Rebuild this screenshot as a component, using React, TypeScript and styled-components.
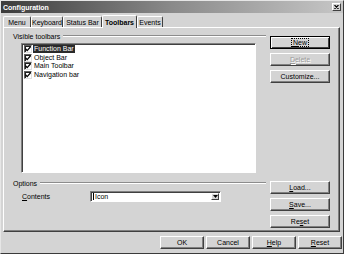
import React from 'react';
import styled, { createGlobalStyle } from 'styled-components';

const GlobalStyle = createGlobalStyle`
  html, body {
    margin: 0;
    padding: 0;
    background: #d4d4d4;
  }
  body {
    font-family: 'Liberation Sans', Arial, sans-serif;
    font-size: 7px;
    color: #000;
  }
`;

const Dialog = styled.div`
  width: 344px;
  height: 254px;
  box-sizing: border-box;
  background: #d4d4d4;
  border: 1px solid;
  border-color: #e6e6e6 #3a3a3a #3a3a3a #e6e6e6;
  display: flex;
  flex-direction: column;
  overflow: hidden;
`;

const TitleBar = styled.div`
  height: 12px;
  background: linear-gradient(to right, #3c3c3c 0%, #8a8a8a 50%, #c6c6c6 100%);
  display: flex;
  align-items: center;
  justify-content: space-between;
  padding: 0 2px 0 2px;
`;

const Title = styled.span`
  color: #fff;
  font-weight: bold;
  font-size: 7px;
`;

const CloseBox = styled.div`
  width: 9px;
  height: 8px;
  box-sizing: border-box;
  background: #d4d4d4;
  border: 1px solid;
  border-color: #fff #404040 #404040 #fff;
  display: flex;
  align-items: center;
  justify-content: center;
`;

const TabStrip = styled.div`
  height: 14px;
  display: flex;
  align-items: flex-end;
  padding-left: 2px;
`;

const Tab = styled.div<{ $w: number; $active?: boolean }>`
  width: ${(p) => p.$w}px;
  height: ${(p) => (p.$active ? 13 : 11)}px;
  margin-bottom: ${(p) => (p.$active ? -1 : 0)}px;
  box-sizing: border-box;
  border-top: 1px solid #fff;
  border-left: 1px solid #fff;
  border-right: 1px solid #404040;
  border-radius: 2px 2px 0 0;
  background: #d4d4d4;
  font-weight: ${(p) => (p.$active ? 'bold' : 'normal')};
  display: flex;
  align-items: center;
  justify-content: center;
  position: relative;
  z-index: ${(p) => (p.$active ? 2 : 1)};
`;

const Panel = styled.div`
  height: 205px;
  margin: 0 3px 0 2px;
  box-sizing: border-box;
  border: 1px solid;
  border-color: #fff #404040 #404040 #fff;
  box-shadow: inset -1px -1px 0 #808080;
  display: flex;
`;

const LeftColumn = styled.div`
  width: 262px;
  display: flex;
  flex-direction: column;
  padding-top: 4px;
`;

const GroupHeader = styled.div`
  display: flex;
  align-items: center;
  height: 8px;
  padding-left: 9px;
`;

const GroupLine = styled.div`
  flex: 1;
  height: 0;
  margin-left: 3px;
  border-top: 1px solid #8c8c8c;
  border-bottom: 1px solid #fff;
`;

const ListBox = styled.div`
  margin: 3px 0 0 17px;
  width: 235px;
  height: 130px;
  box-sizing: border-box;
  background: #fff;
  border: 1px solid;
  border-color: #808080 #fff #fff #808080;
  box-shadow: inset 1px 1px 0 #404040;
  padding: 1px 0 0 2px;
`;

const ListItem = styled.div`
  height: 8.5px;
  display: flex;
  align-items: center;
`;

const CheckBox = styled.div`
  width: 8px;
  height: 8px;
  box-sizing: border-box;
  background: #fff;
  border: 1px solid;
  border-color: #606060 #e0e0e0 #e0e0e0 #606060;
  box-shadow: inset 1px 1px 0 #202020;
  display: flex;
  align-items: center;
  justify-content: center;
  margin-right: 1px;
`;

const ItemLabel = styled.span<{ $selected?: boolean }>`
  padding: 0 1px;
  line-height: 8px;
  background: ${(p) => (p.$selected ? '#2a2a2a' : 'transparent')};
  color: ${(p) => (p.$selected ? '#fff' : '#000')};
`;

const OptionsGroup = styled.div`
  margin-top: 6px;
`;

const FieldRow = styled.div`
  display: flex;
  align-items: center;
  margin-top: 4px;
  padding-left: 18px;
  height: 11px;
`;

const FieldLabel = styled.span`
  width: 68px;
`;

const Select = styled.div`
  width: 131px;
  height: 11px;
  box-sizing: border-box;
  background: #fff;
  border: 1px solid;
  border-color: #808080 #fff #fff #808080;
  box-shadow: inset 1px 1px 0 #404040;
  display: flex;
  align-items: center;
  padding-left: 2px;
`;

const SelectText = styled.span`
  flex: 1;
  border-left: 1px solid #000;
  padding-left: 1px;
  line-height: 7px;
`;

const ArrowButton = styled.div`
  width: 8px;
  height: 7px;
  margin-right: 1px;
  box-sizing: border-box;
  background: #d4d4d4;
  border: 1px solid;
  border-color: #fff #404040 #404040 #fff;
  display: flex;
  align-items: center;
  justify-content: center;
`;

const RightColumn = styled.div`
  width: 60px;
  margin-left: 4px;
  padding: 8px 0 3px;
  display: flex;
  flex-direction: column;
  gap: 4px;
`;

const Spacer = styled.div`
  flex: 1;
`;

const Button = styled.div<{ $w?: number; $default?: boolean; $disabled?: boolean }>`
  width: ${(p) => p.$w ?? 60}px;
  height: 13px;
  box-sizing: border-box;
  background: #d4d4d4;
  border: 1px solid;
  border-color: ${(p) => (p.$default ? '#000' : '#fff #404040 #404040 #fff')};
  box-shadow: ${(p) =>
    p.$default
      ? 'inset 1px 1px 0 #fff, inset -1px -1px 0 #404040'
      : 'inset -1px -1px 0 #808080'};
  color: ${(p) => (p.$disabled ? '#9a9a9a' : '#000')};
  text-shadow: ${(p) => (p.$disabled ? '1px 1px 0 #fff' : 'none')};
  display: flex;
  align-items: center;
  justify-content: center;
  flex-shrink: 0;
`;

const FocusLabel = styled.span`
  outline: 1px dotted #000;
  line-height: 7px;
  padding: 0 1px;
`;

const Footer = styled.div`
  display: flex;
  justify-content: flex-end;
  gap: 2px;
  margin-top: 4px;
  padding-right: 1px;
`;

const CheckMark = () => (
  <svg width="6" height="6" viewBox="0 0 6 6">
    <path d="M0.5 2.8 L2.2 4.6 L5.6 0.8" stroke="#000" strokeWidth="1.3" fill="none" />
  </svg>
);

const toolbars = [
  { name: 'Function Bar', selected: true },
  { name: 'Object Bar' },
  { name: 'Main Toolbar' },
  { name: 'Navigation bar' },
];

const tabs = [
  { name: 'Menu', w: 28 },
  { name: 'Keyboard', w: 32 },
  { name: 'Status Bar', w: 39 },
  { name: 'Toolbars', w: 35, active: true },
  { name: 'Events', w: 26 },
];

export default function App() {
  return (
    <>
      <GlobalStyle />
      <Dialog>
        <TitleBar>
          <Title>Configuration</Title>
          <CloseBox>
            <svg width="5" height="4" viewBox="0 0 5 4">
              <path d="M0.5 0 L4.5 4 M4.5 0 L0.5 4" stroke="#000" strokeWidth="1.1" />
            </svg>
          </CloseBox>
        </TitleBar>

        <TabStrip>
          {tabs.map((t) => (
            <Tab key={t.name} $w={t.w} $active={t.active}>
              {t.name}
            </Tab>
          ))}
        </TabStrip>

        <Panel>
          <LeftColumn>
            <GroupHeader>
              <span>Visible toolbars</span>
              <GroupLine />
            </GroupHeader>
            <ListBox>
              {toolbars.map((t) => (
                <ListItem key={t.name}>
                  <CheckBox>
                    <CheckMark />
                  </CheckBox>
                  <ItemLabel $selected={t.selected}>{t.name}</ItemLabel>
                </ListItem>
              ))}
            </ListBox>

            <OptionsGroup>
              <GroupHeader>
                <span>Options</span>
                <GroupLine />
              </GroupHeader>
              <FieldRow>
                <FieldLabel>
                  <u>C</u>ontents
                </FieldLabel>
                <Select>
                  <SelectText>Icon</SelectText>
                  <ArrowButton>
                    <svg width="5" height="3" viewBox="0 0 5 3">
                      <path d="M0 0 H5 L2.5 3 Z" fill="#000" />
                    </svg>
                  </ArrowButton>
                </Select>
              </FieldRow>
            </OptionsGroup>
          </LeftColumn>

          <RightColumn>
            <Button $default>
              <FocusLabel>
                <u>N</u>ew
              </FocusLabel>
            </Button>
            <Button $disabled>
              <span>
                <u>D</u>elete
              </span>
            </Button>
            <Button>Customize...</Button>
            <Spacer />
            <Button>
              <span>
                <u>L</u>oad...
              </span>
            </Button>
            <Button>
              <span>
                <u>S</u>ave...
              </span>
            </Button>
            <Button>
              <span>
                Re<u>s</u>et
              </span>
            </Button>
          </RightColumn>
        </Panel>

        <Footer>
          <Button $w={44}>OK</Button>
          <Button $w={44}>Cancel</Button>
          <Button $w={44}>
            <span>
              <u>H</u>elp
            </span>
          </Button>
          <Button $w={44}>
            <span>
              <u>R</u>eset
            </span>
          </Button>
        </Footer>
      </Dialog>
    </>
  );
}
